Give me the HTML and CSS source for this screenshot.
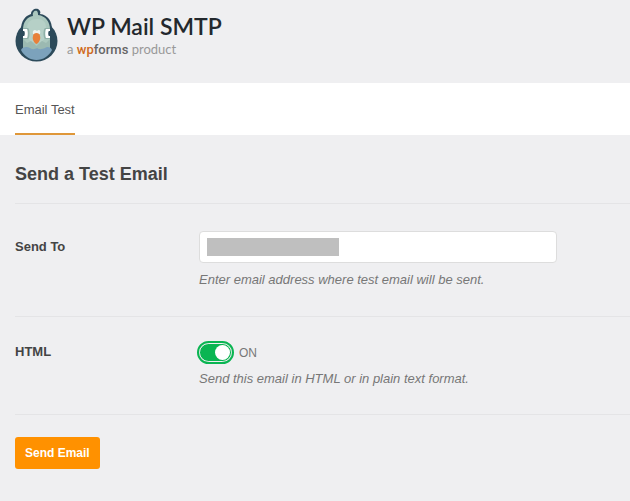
FILE: index.html
```html
<!DOCTYPE html>
<html lang="en">
<head>
    <meta charset="UTF-8">
    <meta name="viewport" content="width=device-width, initial-scale=1.0">
    <title>WP Mail SMTP</title>
    <link rel="stylesheet" href="styles.css">
</head>
<body>
    <header class="header">
        <svg class="logo" viewBox="0 0 43 54" aria-hidden="true">
            <ellipse cx="21.5" cy="33" rx="21" ry="20.5" fill="#2c4a5a"/>
            <path d="M6 38V22C6 13 10 8 16 6C16 2 20 0 23 1C25 2 26 4 25 6C33 7 37 13 37 22V38Z" fill="#2c4a5a"/>
            <path d="M8 41V22C8 14 12 9 18 8C17 4 20 2 22 3C23 4 23 6 23 7C31 8 35 14 35 22V41Z" fill="#abc8be"/>
            <path d="M12 20C12 14 16 11 22 11C28 11 31 14 31 20L30 30C27 36 16 36 13 30Z" fill="#b6d0c7"/>
            <path d="M8 31L12 35L16 33L21.5 38L27 33L31 35L35 31V42H8Z" fill="#9bb9b1"/>
            <path d="M6 42C7 39 12 38 15 40C18 42 20 41 22 40C25 42 27 41 30 40C32 38 36 39 37 42C34 48 28 52 21.5 52C15 52 9 48 6 42Z" fill="#7ca2bc"/>
            <path d="M8 20H13C15 21 15 30 13 31H8Z" fill="#8fb0a8"/>
            <path d="M35 20H30C28 21 28 30 30 31H35Z" fill="#8fb0a8"/>
            <path d="M8 21H12C13 22 13 29 12 30H8Z" fill="#fff"/>
            <path d="M35 21H31C30 22 30 29 31 30H35Z" fill="#fff"/>
            <path d="M8 23H9C10 23 10 28 9 28H8Z" fill="#2c4a5a"/>
            <path d="M35 23H34C33 23 33 28 34 28H35Z" fill="#2c4a5a"/>
            <path d="M18 26C17 22 20 21 22 23C24 21 26 22 25 26Z" fill="#eef2ef"/>
            <path d="M18 28C18 24 25 24 25 28C26 31 24 35 21.5 36C19 35 17 31 18 28Z" fill="#e8803a"/>
        </svg>
        <div class="brand">
            <h1>WP Mail SMTP</h1>
            <p>a <span class="wpforms"><span>wp</span>forms</span> product</p>
        </div>
    </header>

    <nav class="tabs">
        <a href="#test" class="tab active">Email Test</a>
    </nav>

    <form class="content" id="test">
        <h2>Send a Test Email</h2>

        <div class="setting-row">
            <label class="setting-label" for="send-to">Send To</label>
            <div class="setting-field">
                <div class="input-wrap">
                    <input type="email" id="send-to" class="text-input">
                    <span class="redacted"></span>
                </div>
                <p class="desc">Enter email address where test email will be sent.</p>
            </div>
        </div>

        <div class="setting-row">
            <label class="setting-label" for="html-on">HTML</label>
            <div class="setting-field">
                <label class="toggle">
                    <input type="checkbox" id="html-on" class="switch" checked>
                    <span>ON</span>
                </label>
                <p class="desc">Send this email in HTML or in plain text format.</p>
            </div>
        </div>

        <button type="button" class="submit">Send Email</button>
    </form>
</body>
</html>
```
FILE: styles.css
```css
* {
    box-sizing: border-box;
}
body {
    margin: 0;
    background-color: #efeff1;
    color: #444;
    font-family: "Liberation Sans", Arial, sans-serif;
    font-size: 13px;
    line-height: 18px;
}
h1, h2, p {
    margin: 0;
}

/* Header */
.header {
    display: flex;
    gap: 9px;
    height: 83px;
    padding: 8px 15px;
}
.logo {
    width: 43px;
    height: 54px;
}
.brand {
    padding-top: 4px;
    font-family: Lato, sans-serif;
}
.brand h1 {
    color: #23282d;
    font-size: 23px;
    font-weight: 600;
    line-height: 28px;
}
.brand p {
    color: #999;
    font-size: 13px;
}
.wpforms {
    color: #666;
    font-family: Roboto, sans-serif;
    font-size: 13px;
    font-weight: 500;
}
.wpforms span {
    color: #d06a1c;
}

/* Tabs */
.tabs {
    display: flex;
    height: 52px;
    padding: 0 15px;
    background-color: #fff;
}
.tab {
    padding-top: 18px;
    border-bottom: 2px solid #fff;
    color: #555;
    text-decoration: none;
}
.tab.active {
    border-color: #df9739;
}

/* Settings */
.content {
    padding-left: 15px;
}
.content h2 {
    padding: 27px 0 17px;
    border-bottom: 1px solid #e4e4e6;
    font-size: 18px;
    line-height: 24px;
}
.setting-row {
    display: flex;
    padding: 27px 0;
    border-bottom: 1px solid #e4e4e6;
}
.setting-row + .setting-row {
    padding: 24px 0 26px;
}
.setting-label {
    flex: 0 0 184px;
    padding-top: 7px;
    font-weight: bold;
}
.setting-row + .setting-row .setting-label {
    padding-top: 2px;
}
.setting-field {
    flex: 1;
}
.input-wrap {
    position: relative;
    max-width: 358px;
}
.text-input {
    display: block;
    width: 100%;
    height: 32px;
    padding: 0 8px;
    border: 1px solid #ddd;
    border-radius: 4px;
    background-color: #fff;
    font: inherit;
}
.redacted {
    position: absolute;
    top: 7px;
    left: 8px;
    width: 132px;
    height: 18px;
    background-color: #bfbfbf;
}
.desc {
    padding-top: 8px;
    color: #777;
    font-style: italic;
}
.toggle {
    display: flex;
    align-items: center;
    gap: 7px;
    height: 23px;
    color: #777;
    font-size: 12px;
}
.toggle + .desc {
    padding-top: 6px;
}
.switch {
    display: flex;
    justify-content: flex-end;
    align-items: center;
    width: 33px;
    height: 19px;
    margin: 0;
    padding: 0 1px;
    appearance: none;
    border: 1px solid #efeff1;
    border-radius: 12px;
    outline: 2px solid #0ab552;
    background-color: #0ab552;
}
.switch::before {
    content: "";
    width: 15px;
    height: 15px;
    border-radius: 50%;
    background-color: #fff;
}
.switch:not(:checked) {
    justify-content: flex-start;
    outline-color: #bbb;
    background-color: #bbb;
}
.submit {
    height: 32px;
    margin: 22px 0;
    padding: 0 10px;
    border: none;
    border-radius: 3px;
    background-color: #ff9100;
    color: #fff;
    font-family: inherit;
    font-size: 12px;
    font-weight: bold;
    cursor: pointer;
}
```
